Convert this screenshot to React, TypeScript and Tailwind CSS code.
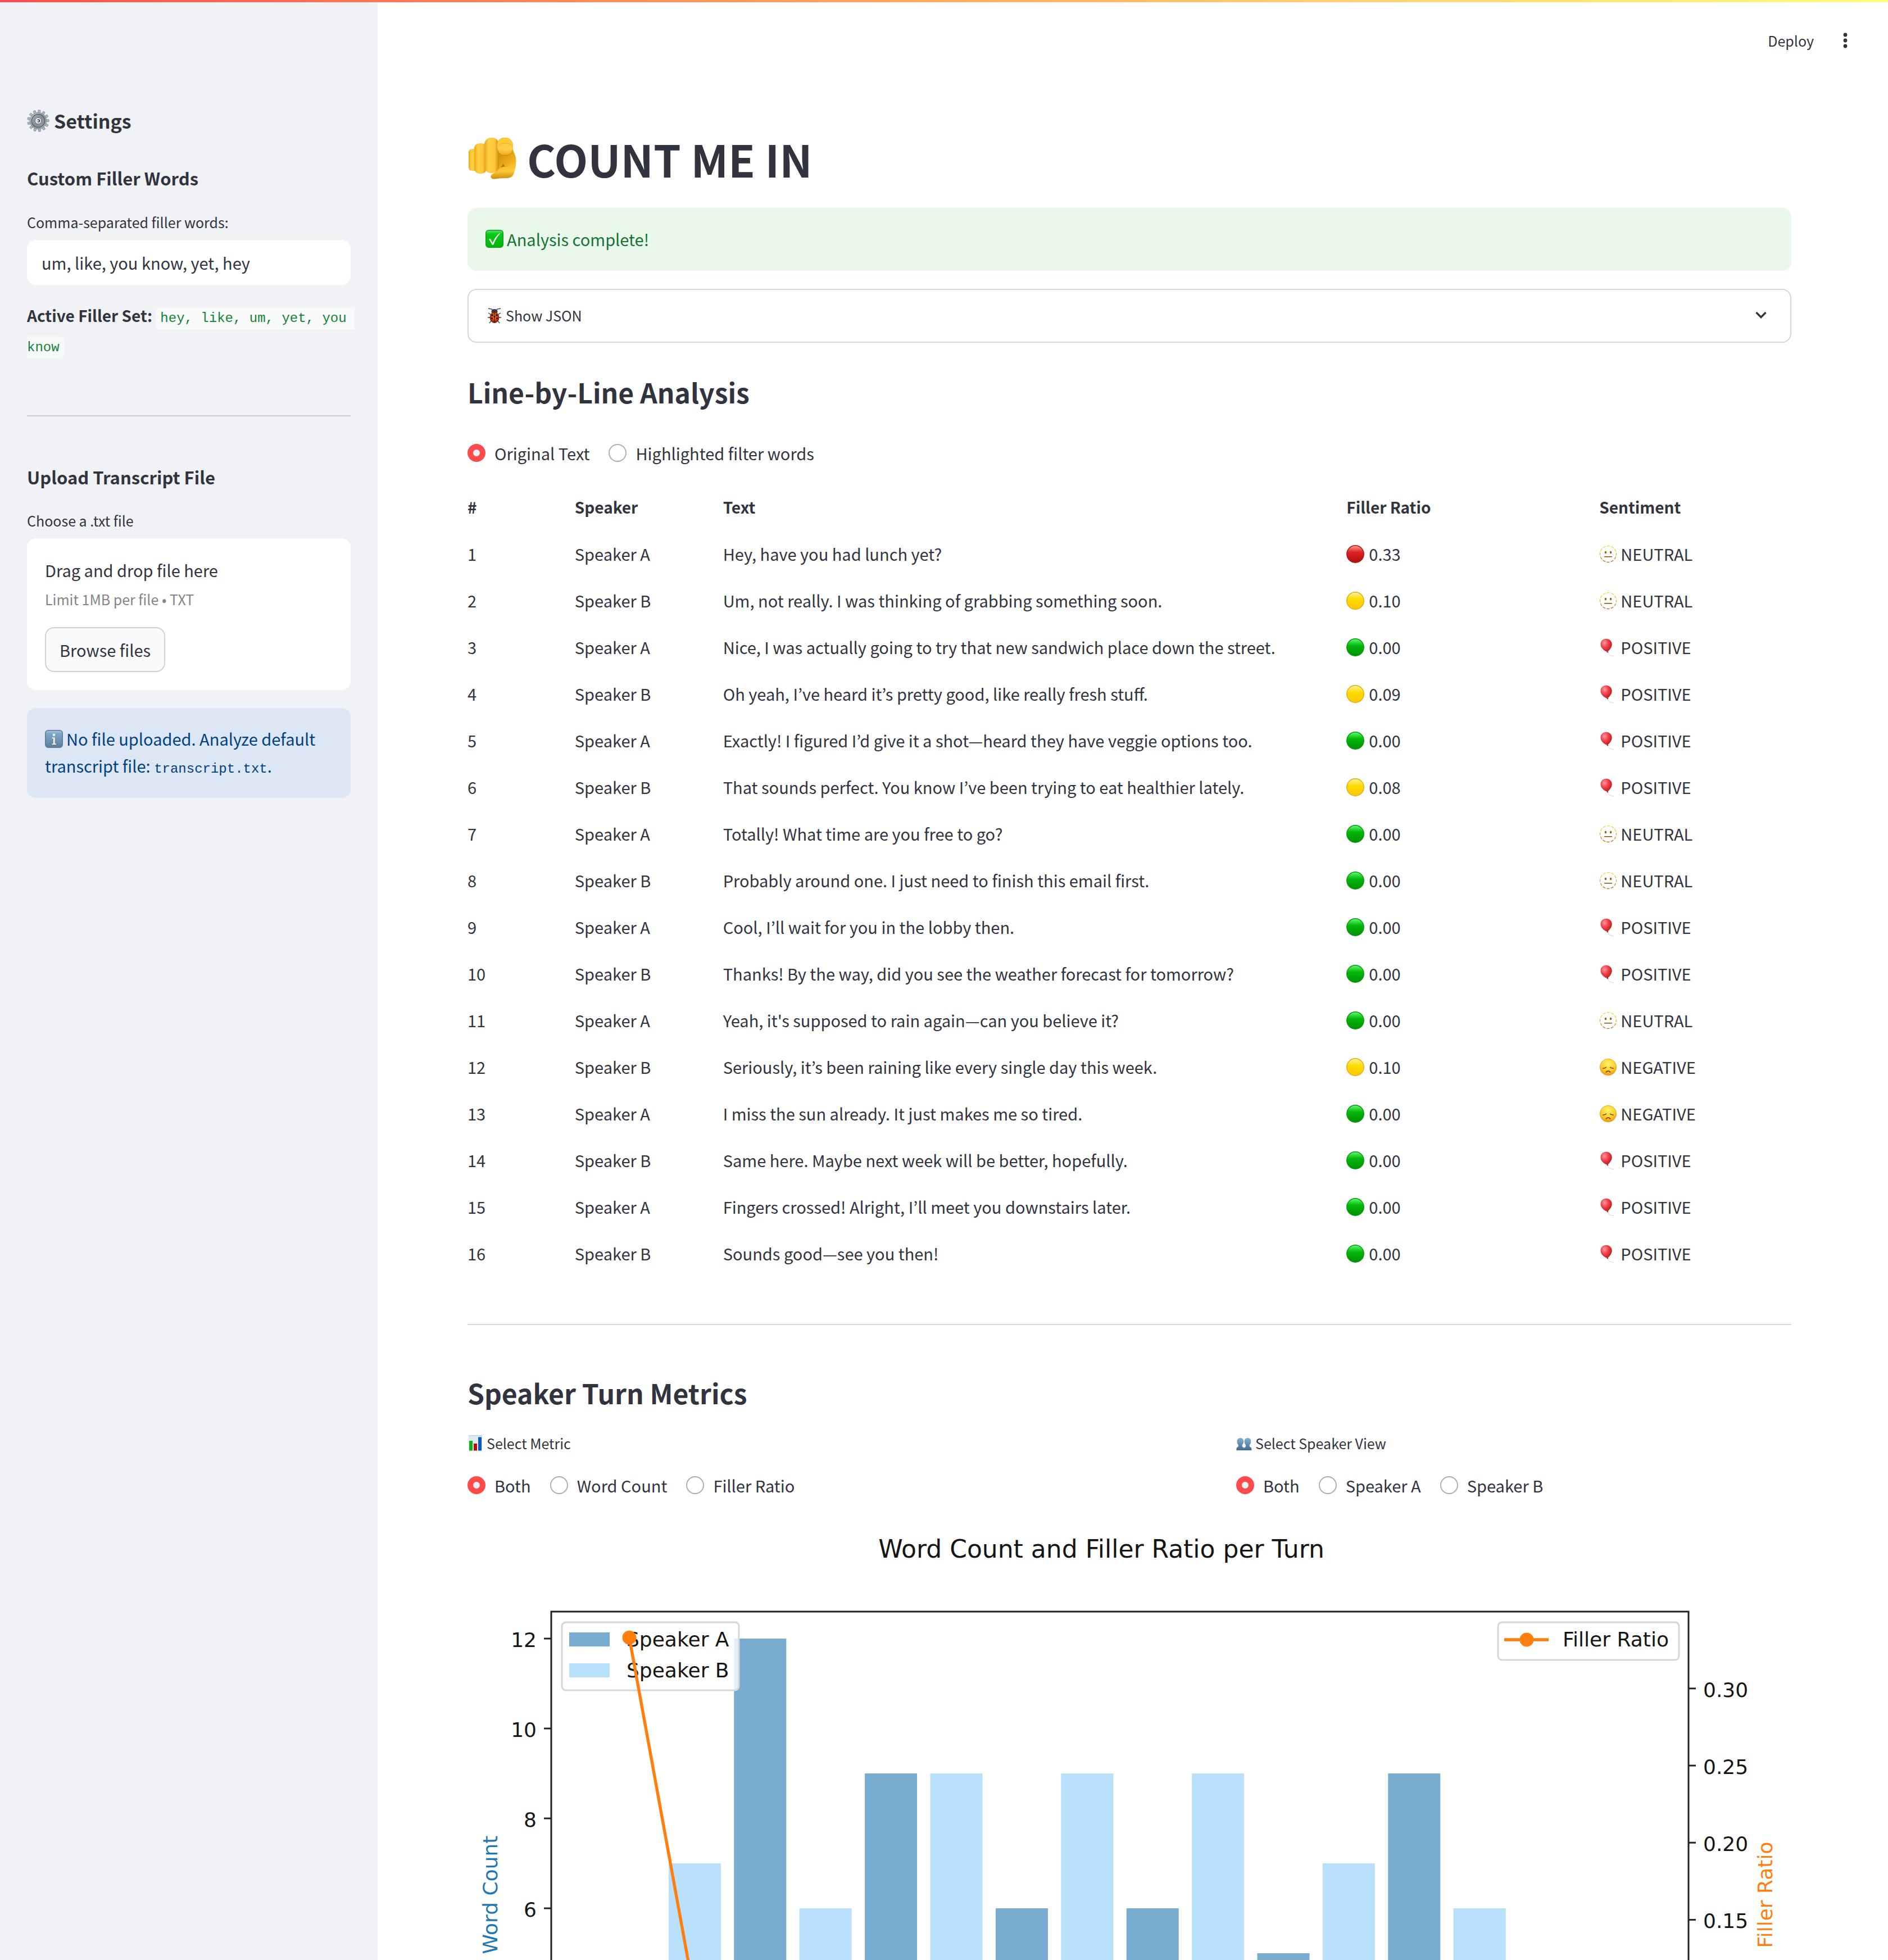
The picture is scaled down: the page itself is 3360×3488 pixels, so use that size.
import React, { useState } from "react";

/* ---------- shared gradients for the glossy icons ---------- */

function IconDefs() {
  return (
    <svg aria-hidden="true" className="absolute h-0 w-0">
      <defs>
        <linearGradient id="dot-red" x1="0" y1="0" x2="0" y2="1">
          <stop offset="0.05" stopColor="#ff8f8a" />
          <stop offset="0.4" stopColor="#e0201f" />
          <stop offset="1" stopColor="#ac0f10" />
        </linearGradient>
        <linearGradient id="dot-yellow" x1="0" y1="0" x2="0" y2="1">
          <stop offset="0.05" stopColor="#fff08a" />
          <stop offset="0.4" stopColor="#ffdb05" />
          <stop offset="1" stopColor="#ffc800" />
        </linearGradient>
        <linearGradient id="dot-green" x1="0" y1="0" x2="0" y2="1">
          <stop offset="0.05" stopColor="#57f563" />
          <stop offset="0.4" stopColor="#02b70a" />
          <stop offset="1" stopColor="#009004" />
        </linearGradient>
        <linearGradient id="check-green" x1="0" y1="0" x2="0" y2="1">
          <stop offset="0" stopColor="#5ee86a" />
          <stop offset="0.22" stopColor="#06cb16" />
          <stop offset="1" stopColor="#00b50c" />
        </linearGradient>
        <linearGradient id="dash-ring" x1="0" y1="0" x2="0" y2="1">
          <stop offset="0" stopColor="#f9dc3c" />
          <stop offset="0.5" stopColor="#eab13c" />
          <stop offset="1" stopColor="#c96a12" />
        </linearGradient>
        <radialGradient id="balloon" cx="0.35" cy="0.3" r="0.8">
          <stop offset="0" stopColor="#ff9b9f" />
          <stop offset="0.4" stopColor="#f4434c" />
          <stop offset="1" stopColor="#a90f17" />
        </radialGradient>
        <radialGradient id="sad-face" cx="0.5" cy="0.3" r="0.75">
          <stop offset="0" stopColor="#fff36a" />
          <stop offset="0.55" stopColor="#ffd02f" />
          <stop offset="1" stopColor="#ea8d0c" />
        </radialGradient>
        <linearGradient id="info-blue" x1="0" y1="0" x2="0" y2="1">
          <stop offset="0" stopColor="#a9c6dc" />
          <stop offset="0.2" stopColor="#7ea6c8" />
          <stop offset="1" stopColor="#5f7c97" />
        </linearGradient>
        <linearGradient id="people-blue" x1="0" y1="0" x2="0" y2="1">
          <stop offset="0" stopColor="#86b0d0" />
          <stop offset="1" stopColor="#44698f" />
        </linearGradient>
        <linearGradient id="gear-metal" x1="0" y1="0" x2="1" y2="1">
          <stop offset="0" stopColor="#cfdce3" />
          <stop offset="0.5" stopColor="#8f9a9f" />
          <stop offset="1" stopColor="#aebcc6" />
        </linearGradient>
        <linearGradient id="finger" x1="0" y1="0" x2="1" y2="0">
          <stop offset="0" stopColor="#eba914" />
          <stop offset="0.3" stopColor="#ffce48" />
          <stop offset="0.7" stopColor="#fdc63a" />
          <stop offset="1" stopColor="#cc8c10" />
        </linearGradient>
        <linearGradient id="fingertip" x1="0" y1="0" x2="0" y2="1">
          <stop offset="0" stopColor="#fbc62e" />
          <stop offset="0.65" stopColor="#ffcf4a" />
          <stop offset="1" stopColor="#efac1c" />
        </linearGradient>
        <linearGradient id="palm" x1="0" y1="0" x2="0.6" y2="1">
          <stop offset="0" stopColor="#bd7c05" />
          <stop offset="0.5" stopColor="#e2a014" />
          <stop offset="1" stopColor="#fbc32d" />
        </linearGradient>
        <linearGradient id="thumb" x1="0" y1="0" x2="0" y2="1">
          <stop offset="0" stopColor="#f2b521" />
          <stop offset="0.6" stopColor="#fcc83a" />
          <stop offset="1" stopColor="#cf8b0c" />
        </linearGradient>
        <radialGradient id="bug" cx="0.5" cy="0.4" r="0.6">
          <stop offset="0" stopColor="#f98a2c" />
          <stop offset="0.6" stopColor="#d9400f" />
          <stop offset="1" stopColor="#8a1206" />
        </radialGradient>
      </defs>
    </svg>
  );
}

const DOTS = {
  red: { fill: "url(#dot-red)", stroke: "#b51414" },
  yellow: { fill: "url(#dot-yellow)", stroke: "#e3a912" },
  green: { fill: "url(#dot-green)", stroke: "#069a0c" },
};

function Dot({ tone }: { tone: keyof typeof DOTS }) {
  return (
    <svg aria-hidden="true" viewBox="0 0 32 32" className="size-8 shrink-0">
      <circle cx="16" cy="16" r="15.2" fill={DOTS[tone].fill} stroke={DOTS[tone].stroke} strokeWidth="1.4" />
    </svg>
  );
}

function NeutralIcon() {
  return (
    <svg aria-hidden="true" viewBox="0 0 32 32" className="size-8 shrink-0">
      <circle cx="16" cy="16" r="14.4" fill="none" stroke="url(#dash-ring)" strokeWidth="1.3" strokeDasharray="5.4 2.14" strokeDashoffset="2.7" />
      <ellipse cx="11.4" cy="13" rx="1.8" ry="2.3" fill="#a5620a" />
      <ellipse cx="20.6" cy="13" rx="1.8" ry="2.3" fill="#a5620a" />
      <path d="M9.6 20.8h12.8" stroke="#8a4b08" strokeWidth="1.5" strokeLinecap="round" />
    </svg>
  );
}

function BalloonIcon() {
  return (
    <svg aria-hidden="true" viewBox="0 0 32 32" className="size-8 shrink-0">
      <path d="M15.2 24.5c.6 4 4.5 7 10.5 7" fill="none" stroke="#cfcfd2" strokeWidth="1" />
      <path d="M12.5.8c6 0 10.2 4.4 10.2 9.8 0 5.2-3.6 9.9-7.2 12.6l.9 1.9-3 .1.5-1.7C8.2 22.2 2.500 16.4 2.5 10.4 2.5 5 6.7.8 12.5.8z" fill="url(#balloon)" />
    </svg>
  );
}

function SadIcon() {
  return (
    <svg aria-hidden="true" viewBox="0 0 32 32" className="size-8 shrink-0">
      <circle cx="16" cy="16" r="14.7" fill="url(#sad-face)" stroke="#e2981b" strokeWidth="0.7" />
      <path d="M6.8 18.3c2.4-.2 4.3-.9 5.6-2.1M25.2 18.3c-2.4-.2-4.3-.9-5.6-2.1M12.3 25.2c1.2-3 6.2-3 7.4 0" fill="none" stroke="#6e3d05" strokeWidth="1.5" strokeLinecap="round" />
    </svg>
  );
}

function GearIcon() {
  const teeth = Array.from({ length: 13 }, (_, i) => (i * 360) / 13);
  return (
    <svg aria-hidden="true" viewBox="0 0 40 40" className="size-10 shrink-0">
      {teeth.map((a) => (
        <path key={a} d="M17.6 6.5 18.2.8h3.6l.6 5.7z" fill="#a9b9c3" stroke="#66737a" strokeWidth="0.6" transform={`rotate(${a + 6} 20 20)`} />
      ))}
      <circle cx="20" cy="20" r="14.6" fill="url(#gear-metal)" stroke="#66737a" strokeWidth="0.6" />
      <circle cx="20" cy="20" r="11.5" fill="none" stroke="#5d686e" strokeWidth="1.8" />
      <circle cx="20" cy="20" r="8.5" fill="none" stroke="#7c888e" strokeWidth="1.5" />
      <circle cx="20" cy="20" r="5.8" fill="#dfe5e8" stroke="#5a5f62" strokeWidth="1" />
      <circle cx="20.5" cy="20" r="2.7" fill="#4c4138" />
      <circle cx="19.5" cy="20" r="1.6" fill="#f3f5f6" />
    </svg>
  );
}

function PointingHandIcon() {
  return (
    <svg aria-hidden="true" viewBox="0 -2 88 80" className="h-20 w-[88px] shrink-0">
      <path d="M50 22 80 16c0 4 1 8 3 12 3 6 4 12 3 19-1 8-2 14-5 20L52 66z" fill="url(#palm)" />
      <path d="M86 40c1 8-1 18-4 26-2 5-7 7-12 7-7 0-12 0-18 1-5 1-9 1-10-2-2-3 1-6 5-8 6-3 9-9 17-11 6-1 9 0 12-2 4-3 6-7 10-11z" fill="url(#thumb)" />
      <path d="M56 56c4-3 7-5 8-10 0 5 2 7 6 6-6 0-10 1-14 4z" fill="#a86c04" />
      <rect x="2" y="21" width="17" height="39" rx="6" fill="url(#finger)" />
      <rect x="12" y="11" width="22" height="54" rx="9" fill="url(#finger)" />
      <rect x="30" y="1" width="26" height="63" rx="12" fill="url(#finger)" />
      <path d="M53 16C53 6 58 1 66 1s15 5 15 14c0 11-5 18-14 18s-14-7-14-17z" fill="#c98a0a" />
      <path d="M53 15C53 6 58 1 66 1s15 5 15 14c0 11-5 17-14 17s-14-6-14-17z" fill="url(#fingertip)" />
      <path d="M55 16c1-4 6-5 12-5s11 1 12 5" fill="none" stroke="#eaae1f" strokeWidth="1" />
    </svg>
  );
}

function CheckIcon() {
  return (
    <svg aria-hidden="true" viewBox="0 0 32 32" className="size-8 shrink-0">
      <rect x="0.7" y="0.7" width="30.6" height="30.6" rx="5" fill="url(#check-green)" stroke="#169b22" strokeWidth="1.4" />
      <path d="M6 16.8c1.2-1.4 2.7-1.2 3.5.3l3.2 6.2C15.500 16 19.5 10 25.5 5.8c.6.1.7.6.4 1C20.5 12.5 17 19 14.3 26.2c-.6 1-2.1 1-2.7.1C9.8 22.8 8 19.8 6 16.800z" fill="#fff" />
    </svg>
  );
}

function InfoIcon() {
  return (
    <svg aria-hidden="true" viewBox="0 0 32 32" className="mr-1.5 inline-block size-8 align-[-4px]">
      <rect x="0.7" y="0.7" width="30.6" height="30.6" rx="5" fill="url(#info-blue)" stroke="#5c7a96" strokeWidth="1.4" />
      <circle cx="16" cy="8.8" r="2.2" fill="#fff" />
      <path d="M12.5 13.5h5v11H20v1.5h-7.5v-1.5H15V15h-2.5z" fill="#fff" />
    </svg>
  );
}

function LadybugIcon() {
  return (
    <svg aria-hidden="true" viewBox="0 0 28 28" className="size-7 shrink-0">
      <path d="M12 6 9 2 3 1M16 6l3-4 6-1M8 12 3 9M20 12l5-3M7 17H2M21 17h5M9 22l-4 5M19 22l4 5" fill="none" stroke="#3d3d3d" strokeWidth="1.3" />
      <ellipse cx="14" cy="6.5" rx="5.5" ry="4.5" fill="#3a3a3c" />
      <ellipse cx="14" cy="17" rx="8" ry="9.5" fill="url(#bug)" stroke="#5e1206" strokeWidth="0.8" />
      <path d="M14 8v18" stroke="#2a0d05" strokeWidth="1" />
      <circle cx="10" cy="13" r="1.8" fill="#1c0b06" />
      <circle cx="18" cy="13" r="1.8" fill="#1c0b06" />
      <circle cx="9.5" cy="18.5" r="1.6" fill="#1c0b06" />
      <circle cx="18.5" cy="18.5" r="1.6" fill="#1c0b06" />
      <circle cx="14" cy="15.5" r="1.6" fill="#1c0b06" />
    </svg>
  );
}

function BarsIcon() {
  return (
    <svg aria-hidden="true" viewBox="0 0 28 28" className="size-7 shrink-0">
      <rect x="2" y="0" width="24" height="28" fill="#dfeaf3" />
      <rect x="2" y="0" width="24" height="1.5" fill="#c7d3dc" />
      <rect x="3" y="10" width="6" height="17.5" fill="#0db314" />
      <rect x="11" y="15" width="6" height="12.5" fill="#bd0b0b" />
      <rect x="19" y="3.5" width="6" height="24" fill="#0a56c4" />
    </svg>
  );
}

function PeopleIcon() {
  return (
    <svg aria-hidden="true" viewBox="0 0 28 28" className="size-7 shrink-0">
      <path d="M7.5 5c3.6 0 5.8 2.4 5.8 6 0 3-1.2 5-2.6 6.4-.2 2.6.3 3.6 2.8 4.6.5.6.5 2 .5 5H.5c0-3 0-4.4.5-5 2.5-1 3-2 2.800-4.600C2.5 16 1.5 14 1.5 11c0-3.600 2.300-6 6-6z" fill="url(#people-blue)" />
      <path d="M20.5 5c3.600 0 5.800 2.400 5.800 6 0 3-1.200 5-2.600 6.400-.2 2.600.3 3.600 2.800 4.600.5.600.9 2 .9 5H14c0-3 0-4.400.5-5 2.500-1 2.600-2 2.400-4.600-1.400-1.400-2.300-3.400-2.300-6.400 0-3.600 2.200-6 5.900-6z" fill="url(#people-blue)" />
    </svg>
  );
}

/* ---------- controls ---------- */

type RadioRowProps = { name: string; label: string; options: string[] };

function RadioRow({ name, label, options }: RadioRowProps) {
  const [value, setValue] = useState(options[0]);
  return (
    <div role="radiogroup" aria-label={label} className="flex gap-[34px]">
      {options.map((option) => (
        <label key={option} className="flex items-center gap-4 text-[29px] leading-[46px]">
          <input
            type="radio"
            name={name}
            checked={value === option}
            onChange={() => setValue(option)}
            className="size-8 appearance-none rounded-full border-2 border-[#adadb2] bg-white checked:border-[10px] checked:border-[#ff4b4b] checked:bg-[#f0f2f6]"
          />
          {option}
        </label>
      ))}
    </div>
  );
}

/* ---------- sidebar ---------- */

function Sidebar() {
  const [words, setWords] = useState("um, like, you know, yet, hey");
  return (
    <aside className="w-[672px] shrink-0 bg-[#f0f2f6] px-12 pt-[191px]">
      <h2 className="flex items-center gap-2 text-[34px] leading-[48px] font-semibold">
        <GearIcon />
        Settings
      </h2>
      <h3 className="mt-14 text-[31px] leading-[44px] font-semibold">Custom Filler Words</h3>
      <label htmlFor="filler-words" className="mt-9 block text-[25px] leading-10">
        Comma-separated filler words:
      </label>
      <input
        id="filler-words"
        type="text"
        value={words}
        onChange={(e) => setWords(e.target.value)}
        className="mt-3 block h-20 w-full rounded-2xl bg-white px-[26px] text-[29px]"
      />
      <p className="mt-7 -mr-4 text-[28px] leading-[52px]">
        <strong className="font-bold">Active Filler Set:</strong>{" "}
        <code className="rounded-lg bg-[#f8f9fb] px-2 py-1.5 font-['Liberation_Mono',monospace] text-[24px] leading-none whitespace-pre-wrap text-[#158237]">
          hey, like, um, yet, you know
        </code>
      </p>
      <hr className="mt-[100px] border-t-2 border-[#cccdd2]" />
      <h3 className="mt-[86px] text-[31px] leading-[44px] font-semibold">Upload Transcript File</h3>
      <p className="mt-[35px] text-[25px] leading-10">Choose a .txt file</p>
      <section aria-label="Choose a .txt file" className="mt-3 rounded-2xl bg-white p-8">
        <p className="text-[29px] leading-[48px]">Drag and drop file here</p>
        <p className="mt-2 text-[25px] leading-10 text-[#83848c]">Limit 1MB per file • TXT</p>
        <button
          type="button"
          className="mt-[30px] block h-20 rounded-2xl border-2 border-[#d0d1d5] bg-[#f9fafc] px-6 text-[29px] leading-none"
        >
          Browse files
        </button>
      </section>
      <div role="alert" className="mt-8 rounded-2xl bg-[#dce6f5] px-8 pt-[30px] pb-[34px] text-[29px] leading-[48px] text-[#004280]">
        <InfoIcon />
        No file uploaded. Analyze default transcript file:{" "}
        <code className="font-['Liberation_Mono',monospace] text-[24px] leading-none">transcript.txt</code>.
      </div>
    </aside>
  );
}

/* ---------- table ---------- */

type Sentiment = "NEUTRAL" | "POSITIVE" | "NEGATIVE";
type Line = [text: string, ratio: string, sentiment: Sentiment];

const LINES: Line[] = [
  ["Hey, have you had lunch yet?", "0.33", "NEUTRAL"],
  ["Um, not really. I was thinking of grabbing something soon.", "0.10", "NEUTRAL"],
  ["Nice, I was actually going to try that new sandwich place down the street.", "0.00", "POSITIVE"],
  ["Oh yeah, I’ve heard it’s pretty good, like really fresh stuff.", "0.09", "POSITIVE"],
  ["Exactly! I figured I’d give it a shot—heard they have veggie options too.", "0.00", "POSITIVE"],
  ["That sounds perfect. You know I’ve been trying to eat healthier lately.", "0.08", "POSITIVE"],
  ["Totally! What time are you free to go?", "0.00", "NEUTRAL"],
  ["Probably around one. I just need to finish this email first.", "0.00", "NEUTRAL"],
  ["Cool, I’ll wait for you in the lobby then.", "0.00", "POSITIVE"],
  ["Thanks! By the way, did you see the weather forecast for tomorrow?", "0.00", "POSITIVE"],
  ["Yeah, it's supposed to rain again—can you believe it?", "0.00", "NEUTRAL"],
  ["Seriously, it’s been raining like every single day this week.", "0.10", "NEGATIVE"],
  ["I miss the sun already. It just makes me so tired.", "0.00", "NEGATIVE"],
  ["Same here. Maybe next week will be better, hopefully.", "0.00", "POSITIVE"],
  ["Fingers crossed! Alright, I’ll meet you downstairs later.", "0.00", "POSITIVE"],
  ["Sounds good—see you then!", "0.00", "POSITIVE"],
];

function toneOf(ratio: string): keyof typeof DOTS {
  const r = Number(ratio);
  if (r > 0.2) return "red";
  return r > 0 ? "yellow" : "green";
}

function SentimentIcon({ kind }: { kind: Sentiment }) {
  if (kind === "NEUTRAL") return <NeutralIcon />;
  return kind === "POSITIVE" ? <BalloonIcon /> : <SadIcon />;
}

function LineTable() {
  return (
    <table className="mt-8 w-full table-fixed text-left text-[29px] leading-[51px]">
      <colgroup>
        <col className="w-[8.1%]" />
        <col className="w-[11.2%]" />
        <col className="w-[47.1%]" />
        <col className="w-[19.1%]" />
        <col />
      </colgroup>
      <thead>
        <tr>
          {["#", "Speaker", "Text", "Filler Ratio", "Sentiment"].map((h) => (
            <th key={h} scope="col" className="py-4 text-[28px] font-bold">
              {h}
            </th>
          ))}
        </tr>
      </thead>
      <tbody>
        {LINES.map(([text, ratio, sentiment], i) => (
          <tr key={text}>
            <td className="py-4">{i + 1}</td>
            <td className="py-4">{i % 2 === 0 ? "Speaker A" : "Speaker B"}</td>
            <td className="py-4">{text}</td>
            <td className="py-4">
              <span className="flex items-center gap-2">
                <Dot tone={toneOf(ratio)} />
                {ratio}
              </span>
            </td>
            <td className="py-4">
              <span className="flex items-center gap-1.5">
                <SentimentIcon kind={sentiment} />
                {sentiment}
              </span>
            </td>
          </tr>
        ))}
      </tbody>
    </table>
  );
}

/* ---------- chart ---------- */

const WORDS = [3, 7, 12, 6, 9, 9, 6, 9, 6, 9, 5, 7, 9, 6, 4, 3];
const RATIOS = [0.333, 0.1, 0, 0.09, 0, 0.08, 0, 0, 0, 0, 0, 0.1, 0, 0, 0, 0];
const turnX = (i: number) => 288 + 116.4 * i;
const wordY = (v: number) => 1176 - 80 * v;
const ratioY = (v: number) => 1128 - 2744 * v;

function MetricsChart() {
  return (
    <svg
      role="img"
      aria-label="Word Count and Filler Ratio per Turn"
      viewBox="0 0 2356 1320"
      className="mt-[34px] block w-full font-['DejaVu_Sans',sans-serif] text-[36px]"
      fill="#151515"
    >
      <text x="1128" y="72" textAnchor="middle" className="text-[44px]">
        Word Count and Filler Ratio per Turn
      </text>

      {WORDS.map((v, i) => (
        <rect key={i} x={turnX(i) - 46.5} y={wordY(v)} width="93" height={80 * v} fill={i % 2 === 0 ? "#79acd1" : "#b9e1fb"} />
      ))}

      <rect x="149" y="168" width="2024" height="1008" fill="none" stroke="#222" strokeWidth="3" />

      {[0, 2, 4, 6, 8, 10, 12].map((v) => (
        <g key={v}>
          <path d={`M136 ${wordY(v)}h13`} stroke="#222" strokeWidth="3" />
          <text x="123" y={wordY(v) + 15} textAnchor="end">
            {v}
          </text>
        </g>
      ))}
      {[0, 0.05, 0.1, 0.15, 0.2, 0.25, 0.3].map((v) => (
        <g key={v}>
          <path d={`M2173 ${ratioY(v)}h13`} stroke="#222" strokeWidth="3" />
          <text x="2199" y={ratioY(v) + 15}>
            {v.toFixed(2)}
          </text>
        </g>
      ))}

      <text transform="translate(53 672) rotate(-90)" textAnchor="middle" fill="#1f77b4">
        Word Count
      </text>
      <text transform="translate(2322 672) rotate(-90)" textAnchor="middle" fill="#ff7f0e">
        Filler Ratio
      </text>

      <rect x="168" y="187" width="315" height="121" rx="7" fill="#fff" fillOpacity="0.8" stroke="#d6d6d6" strokeWidth="3" />
      <rect x="181" y="205" width="72" height="25" fill="#79acd1" />
      <rect x="181" y="260" width="72" height="25" fill="#b9e1fb" />
      <text x="283" y="230">
        Speaker A
      </text>
      <text x="283" y="285">
        Speaker B
      </text>

      <polyline points={RATIOS.map((v, i) => `${turnX(i)},${ratioY(v)}`).join(" ")} fill="none" stroke="#ff7f0e" strokeWidth="5.4" />
      {RATIOS.map((v, i) => (
        <circle key={i} cx={turnX(i)} cy={ratioY(v)} r="12.5" fill="#ff7f0e" />
      ))}

      <rect x="1834" y="187" width="322" height="67" rx="7" fill="#fff" fillOpacity="0.8" stroke="#d6d6d6" strokeWidth="3" />
      <path d="M1845 218h79" stroke="#ff7f0e" strokeWidth="5.4" />
      <circle cx="1885" cy="218" r="12.5" fill="#ff7f0e" />
      <text x="1949" y="230">
        Filler Ratio
      </text>
    </svg>
  );
}

/* ---------- page ---------- */

function Header() {
  return (
    <header className="flex h-[140px] items-center justify-end gap-6 pt-1 pr-[60px]">
      <button type="button" className="px-4 text-[25px] leading-10">
        Deploy
      </button>
      <button type="button" aria-label="Main menu" className="size-8">
        <svg aria-hidden="true" viewBox="0 0 32 32" className="size-8" fill="#31333f">
          <circle cx="16" cy="6" r="3.4" />
          <circle cx="16" cy="16" r="3.4" />
          <circle cx="16" cy="26" r="3.4" />
        </svg>
      </button>
    </header>
  );
}

export default function App() {
  return (
    <div className="flex h-screen flex-col bg-white font-['Noto_Sans_CJK_KR',sans-serif] text-[#31333f]">
      <IconDefs />
      <div className="relative flex min-h-0 flex-1">
        <div className="absolute inset-x-0 top-0 h-1 bg-linear-to-r from-[#ff4b4b] to-[#fffd80]" />
        <Sidebar />
        <div className="min-w-0 flex-1 overflow-y-auto [scrollbar-width:none]">
          <Header />
          <main className="pt-[90px] pr-[172px] pl-40">
            <h1 className="flex items-center gap-[18px] text-[78px] leading-[104px] font-bold">
              <PointingHandIcon />
              COUNT ME IN
            </h1>
            <div role="alert" className="mt-9 flex items-center gap-1.5 rounded-2xl bg-[#e9f8eb] px-8 pt-[31px] pb-[33px] text-[29px] leading-[48px] text-[#177233]">
              <CheckIcon />
              Analysis complete!
            </div>
            <button
              type="button"
              aria-expanded="false"
              className="mt-8 flex h-24 w-full items-center gap-1.5 rounded-2xl border-2 border-[#d6d6d9] pr-10 pl-8 text-left text-[25px]"
            >
              <LadybugIcon />
              <span className="flex-1">Show JSON</span>
              <svg aria-hidden="true" viewBox="0 0 24 24" className="size-6" fill="none" stroke="#31333f" strokeWidth="3.4">
                <path d="m3.5 6 8.5 8.5L20.5 6" />
              </svg>
            </button>

            <h2 className="mt-[53px] text-[48px] leading-[68px] font-semibold">Line-by-Line Analysis</h2>
            <div className="mt-[52px]">
              <RadioRow name="text-view" label="Text view" options={["Original Text", "Highlighted filter words"]} />
            </div>
            <LineTable />

            <hr className="mt-[84px] border-t-2 border-[#d6d6d9]" />

            <h2 className="mt-[86px] text-[48px] leading-[68px] font-semibold">Speaker Turn Metrics</h2>
            <div className="mt-9 grid grid-cols-[1336fr_988fr] gap-8">
              <div>
                <p className="mb-8 flex items-center gap-1.5 text-[25px] leading-10">
                  <BarsIcon />
                  Select Metric
                </p>
                <RadioRow name="metric" label="Select Metric" options={["Both", "Word Count", "Filler Ratio"]} />
              </div>
              <div>
                <p className="mb-8 flex items-center gap-1.5 text-[25px] leading-10">
                  <PeopleIcon />
                  Select Speaker View
                </p>
                <RadioRow name="speaker-view" label="Select Speaker View" options={["Both", "Speaker A", "Speaker B"]} />
              </div>
            </div>
            <MetricsChart />
          </main>
        </div>
      </div>
    </div>
  );
}
